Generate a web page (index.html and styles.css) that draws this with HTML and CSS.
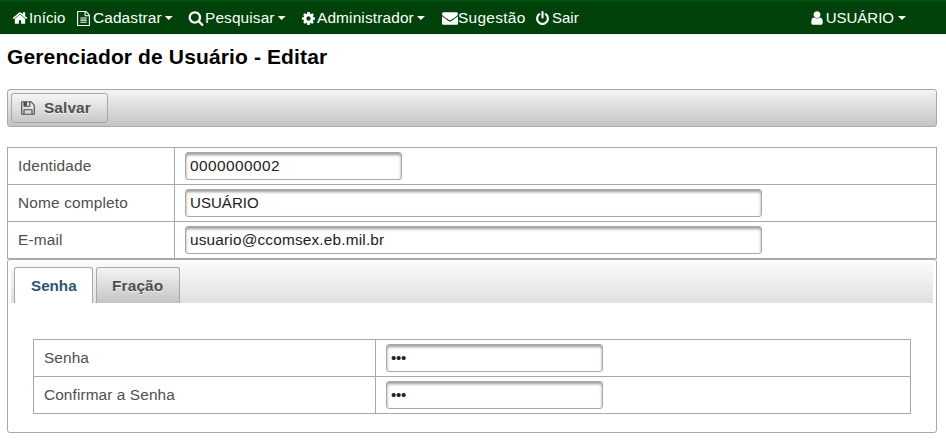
FILE: index.html
```html
<!DOCTYPE html>
<html lang="pt-BR">
<head>
<meta charset="utf-8">
<title>Gerenciador de Usuário - Editar</title>
<link rel="stylesheet" href="styles.css">
</head>
<body>
<nav class="menubar">
  <a class="item home"><svg class="icon" viewBox="0 0 1792 1792"><path d="M1472 992v480q0 26-19 45t-45 19h-384v-384h-256v384h-384q-26 0-45-19t-19-45v-480q0-1 .5-3t.5-3l575-474 575 474q1 2 1 6zm223-69l-62 74q-8 9-21 11h-3q-13 0-21-7l-692-577-692 577q-12 8-24 7-13-2-21-11l-62-74q-8-10-7-23.5t11-21.5l719-599q32-26 76-26t76 26l244 204v-195q0-14 9-23t23-9h192q14 0 23 9t9 23v408l219 182q10 8 11 21.5t-7 23.5z"/></svg><span>Início</span></a>
  <a class="item register"><svg class="icon" viewBox="0 0 1792 1792"><path d="M1596 380q28 28 48 76t20 88v1152q0 40-28 68t-68 28h-1344q-40 0-68-28t-28-68v-1600q0-40 28-68t68-28h896q40 0 88 20t76 48zm-444-244v376h376q-10-29-22-41l-313-313q-12-12-41-22zm384 1528v-1024h-416q-40 0-68-28t-28-68v-416h-768v1536h1280zm-1024-864q0-14 9-23t23-9h704q14 0 23 9t9 23v64q0 14-9 23t-23 9h-704q-14 0-23-9t-9-23v-64zm736 224q14 0 23 9t9 23v64q0 14-9 23t-23 9h-704q-14 0-23-9t-9-23v-64q0-14 9-23t23-9h704zm0 256q14 0 23 9t9 23v64q0 14-9 23t-23 9h-704q-14 0-23-9t-9-23v-64q0-14 9-23t23-9h704z"/></svg><span>Cadastrar</span><i class="caret"></i></a>
  <a class="item search"><svg class="icon" viewBox="0 0 1792 1792"><path d="M1216 832q0-185-131.5-316.5t-316.5-131.5-316.5 131.5-131.5 316.5 131.5 316.5 316.5 131.5 316.5-131.5 131.5-316.5zm512 832q0 52-38 90t-90 38q-54 0-90-38l-343-342q-179 124-399 124-143 0-273.5-55.5t-225-150-150-225-55.5-273.5 55.5-273.5 150-225 225-150 273.5-55.5 273.5 55.5 225 150 150 225 55.5 273.5q0 220-124 399l343 343q37 37 37 90z"/></svg><span>Pesquisar</span><i class="caret"></i></a>
  <a class="item admin"><svg class="icon" viewBox="0 0 1792 1792"><path d="M1152 896q0-106-75-181t-181-75-181 75-75 181 75 181 181 75 181-75 75-181zm512-109v222q0 12-8 23t-20 13l-185 28q-19 54-39 91 35 50 107 138 10 12 10 25t-9 23q-27 37-99 108t-94 71q-12 0-26-9l-138-108q-44 23-91 38-16 136-29 186-7 28-36 28h-222q-14 0-24.5-8.5t-11.5-21.5l-28-184q-49-16-90-37l-141 107q-10 9-25 9-14 0-25-11-126-114-165-168-7-10-7-23 0-12 8-23 15-21 51-66.5t54-70.5q-27-50-41-99l-183-27q-13-2-21-12.5t-8-23.5v-222q0-12 8-23t19-13l186-28q14-46 39-92-40-57-107-138-10-12-10-24 0-10 9-23 26-36 98.5-107.5t94.5-71.5q13 0 26 10l138 107q44-23 91-38 16-136 29-186 7-28 36-28h222q14 0 24.5 8.5t11.5 21.5l28 184q49 16 90 37l142-107q9-9 24-9 13 0 25 10 129 119 165 170 7 8 7 22 0 12-8 23-15 21-51 66.5t-54 70.5q26 50 41 98l183 28q13 2 21 12.5t8 23.5z"/></svg><span>Administrador</span><i class="caret"></i></a>
  <a class="item suggest"><svg class="icon" viewBox="0 0 1792 1792"><path d="M1792 710v794q0 66-47 113t-113 47h-1472q-66 0-113-47t-47-113v-794q44 49 101 87 362 246 497 345 57 42 92.5 65.5t94.5 48 110 24.5h2q51 0 110-24.5t94.5-48 92.5-65.5q170-123 498-345 57-39 100-87zm0-294q0 79-49 151t-122 123q-376 261-468 325-10 7-42.5 31t-54 38.5-52 32.5-57.5 27-50 9h-2q-23 0-50-9t-57.5-27-52-32.5-54-38.5-42.5-31q-91-64-262-182.5t-205-142.5q-62-42-117-115.5t-55-136.5q0-78 41.5-130t118.5-52h1472q65 0 112.5 47t47.5 113z"/></svg><span>Sugestão</span></a>
  <a class="item exit"><svg class="icon" viewBox="0 0 1792 1792"><path d="M1664 896q0 156-61 298t-164 245-245 164-298 61-298-61-245-164-164-245-61-298q0-182 80.5-343t226.5-270q43-32 95.5-25t83.5 50q32 42 24.5 94.5t-49.5 84.5q-98 74-151.5 181t-53.5 228q0 104 40.5 198.5t109.5 163.5 163.5 109.5 198.5 40.5 198.5-40.5 163.5-109.5 109.5-163.5 40.5-198.5q0-121-53.5-228t-151.5-181q-42-32-49.5-84.5t24.5-94.5q31-43 84-50t95 25q146 109 226.5 270t80.5 343zm-640-768v640q0 52-38 90t-90 38-90-38-38-90v-640q0-52 38-90t90-38 90 38 38 90z"/></svg><span>Sair</span></a>
  <a class="item user"><svg class="icon" viewBox="0 0 1792 1792"><path d="M1536 1399q0 109-62.5 187t-150.5 78h-854q-88 0-150.5-78t-62.5-187q0-85 8.5-160.5t31.5-152 58.5-131 94-89 134.5-34.5q131 128 313 128t313-128q76 0 134.5 34.5t94 89 58.5 131 31.5 152 8.5 160.5zm-256-887q0 159-112.5 271.5t-271.5 112.5-271.5-112.5-112.5-271.5 112.5-271.5 271.5-112.5 271.5 112.5 112.5 271.5z"/></svg><span>USUÁRIO</span><i class="caret"></i></a>
</nav>
<main class="content">
  <h1>Gerenciador de Usuário - Editar</h1>
  <div class="toolbar">
    <button class="save" type="button"><svg class="icon" viewBox="0 0 1792 1792"><path d="M512 1536h768v-384h-768v384zm896 0h128v-896q0-14-10-38.5t-20-34.5l-281-281q-10-10-34-20t-39-10v416q0 40-28 68t-68 28h-576q-40 0-68-28t-28-68v-416h-128v1280h128v-416q0-40 28-68t68-28h832q40 0 68 28t28 68v416zm-384-928v-320q0-13-9.5-22.5t-22.5-9.5h-192q-13 0-22.5 9.5t-9.5 22.5v320q0 13 9.5 22.5t22.5 9.5h192q13 0 22.5-9.5t9.5-22.5zm640 32v928q0 40-28 68t-68 28h-1344q-40 0-68-28t-28-68v-1344q0-40 28-68t68-28h928q40 0 88 20t76 48l280 280q28 28 48 76t20 88z"/></svg><span>Salvar</span></button>
  </div>
  <div class="grid main-grid">
    <div class="row"><label for="ident">Identidade</label><div class="cell"><input class="short digits" id="ident" value="0000000002"></div></div>
    <div class="row"><label for="nome">Nome completo</label><div class="cell"><input class="long upper" id="nome" value="USUÁRIO"></div></div>
    <div class="row"><label for="email">E-mail</label><div class="cell"><input class="long" id="email" value="usuario@ccomsex.eb.mil.br"></div></div>
  </div>
  <section class="tabs">
    <div class="tab-nav">
      <div class="tab active">Senha</div>
      <div class="tab">Fração</div>
    </div>
    <div class="panel">
      <div class="grid pass-grid">
        <div class="row"><label for="senha">Senha</label><div class="cell"><input class="short dots" id="senha" value="•••"></div></div>
        <div class="row"><label for="conf">Confirmar a Senha</label><div class="cell"><input class="short dots" id="conf" value="•••"></div></div>
      </div>
    </div>
  </section>
</main>
</body>
</html>
```
FILE: styles.css
```css
* { box-sizing: border-box; }
body {
  margin: 0;
  background: #fff;
  color: #4f4f4f;
  font: 15px/18px "Liberation Sans", Arial, sans-serif;
  overflow: hidden;
}
.menubar {
  display: flex;
  align-items: center;
  height: 34px;
  padding: 1px 40px 0 12px;
  background: #00420a;
  border-top: 2px solid #00500f;
  border-bottom: 1px solid #003507;
  color: #fff;
}
.item { display: flex; align-items: center; flex: none; white-space: nowrap; }
.icon { width: 15px; height: 15px; fill: currentColor; flex: none; }
.item .icon { margin-right: 2px; }
.caret {
  width: 8px;
  height: 4px;
  margin-left: 3px;
  background: currentColor;
  clip-path: polygon(0 0, 100% 0, 50% 100%);
}
.home { width: 64px; letter-spacing: 0.1px; }
.home .icon { width: 16px; height: 16px; margin-right: 1px; }
.register { width: 112px; font-size: 15.4px; letter-spacing: 0.13px; }
.search { width: 113px; font-size: 15.4px; letter-spacing: 0.13px; }
.search .icon { width: 16px; height: 16px; margin-right: 1px; }
.admin { width: 141px; font-size: 15.4px; letter-spacing: 0.15px; }
.admin .icon { margin-right: 1px; }
.suggest { width: 93px; font-size: 15.4px; letter-spacing: 0.32px; }
.suggest .icon { width: 16px; height: 16px; margin-right: 0; }
.user { margin-left: auto; }
.user .icon { width: 16px; height: 16px; margin-right: 1px; }
.user .caret { margin-left: 4px; }
.content { padding: 0 9px 0 7px; }
h1 {
  margin: 11px 0 20px;
  color: #000;
  font-size: 21px;
  line-height: 24px;
  font-weight: bold;
  letter-spacing: 0.13px;
}
.toolbar {
  display: flex;
  height: 38px;
  padding: 3px;
  border: 1px solid #a8a8a8;
  border-radius: 3px;
  background: linear-gradient(#f4f4f4, #c4c4c4);
}
.save {
  display: flex;
  align-items: center;
  width: 97px;
  height: 30px;
  padding: 0 0 0 8px;
  border: 1px solid #a8a8a8;
  border-radius: 3px;
  background: linear-gradient(#f6f6f6, #c8c8c8);
  color: #4f4f4f;
  font: bold 15.4px/18px "Liberation Sans", Arial, sans-serif;
  letter-spacing: 0.1px;
  text-shadow: 0 1px 0 rgba(255, 255, 255, .7);
}
.save .icon { margin-right: 8px; width: 16px; height: 16px; }
.grid { border: 1px solid #a8a8a8; }
.main-grid { margin-top: 20px; }
.row { display: grid; grid-template-columns: 166px 1fr; height: 37px; border-top: 1px solid #a8a8a8; }
.row:first-child { height: 36px; border-top: 0; }
.row label { padding: 9px 10px; font-size: 15.4px; letter-spacing: 0.16px; }
.cell { padding: 4px 10px; border-left: 1px solid #a8a8a8; }
input {
  display: block;
  height: 28px;
  padding: 0 4px;
  border: 1px solid #a8a8a8;
  border-radius: 3px;
  background: #fff;
  box-shadow: inset 0 2px 3px #999;
  color: #222;
  font: 15.4px "Liberation Sans", Arial, sans-serif;
  letter-spacing: 0.17px;
  outline: none;
}
.short { width: 217px; }
.long { width: 577px; }
.digits { letter-spacing: 0.44px; }
.upper { padding-bottom: 2px; font-size: 15.1px; letter-spacing: 0; }
.dots { padding-bottom: 2px; font-size: 15px; letter-spacing: -0.25px; }
.tabs {
  height: 174px;
  padding: 3px;
  border: 1px solid #a8a8a8;
  border-radius: 3px;
}
.tab-nav {
  display: flex;
  align-items: flex-end;
  gap: 3px;
  height: 40px;
  padding-left: 3px;
  background: linear-gradient(#fafafa, #e0e0e0);
}
.tab {
  height: 36px;
  width: 84px;
  padding: 9px 0 0 15px;
  border: 1px solid #a8a8a8;
  border-bottom: 0;
  border-radius: 3px 3px 0 0;
  background: linear-gradient(#f4f4f4, #c4c4c4);
  font-weight: bold;
  font-size: 15.4px;
  letter-spacing: 0.15px;
  text-shadow: 0 1px 0 rgba(255, 255, 255, .7);
}
.tab.active { width: 79px; padding-left: 16px; background: #fff; color: #2a566f; font-size: 15.2px; letter-spacing: 0; }
.panel { padding: 36px 22px 0; }
.pass-grid .row { grid-template-columns: 341px 1fr; }
.pass-grid label { letter-spacing: 0.1px; }
```
